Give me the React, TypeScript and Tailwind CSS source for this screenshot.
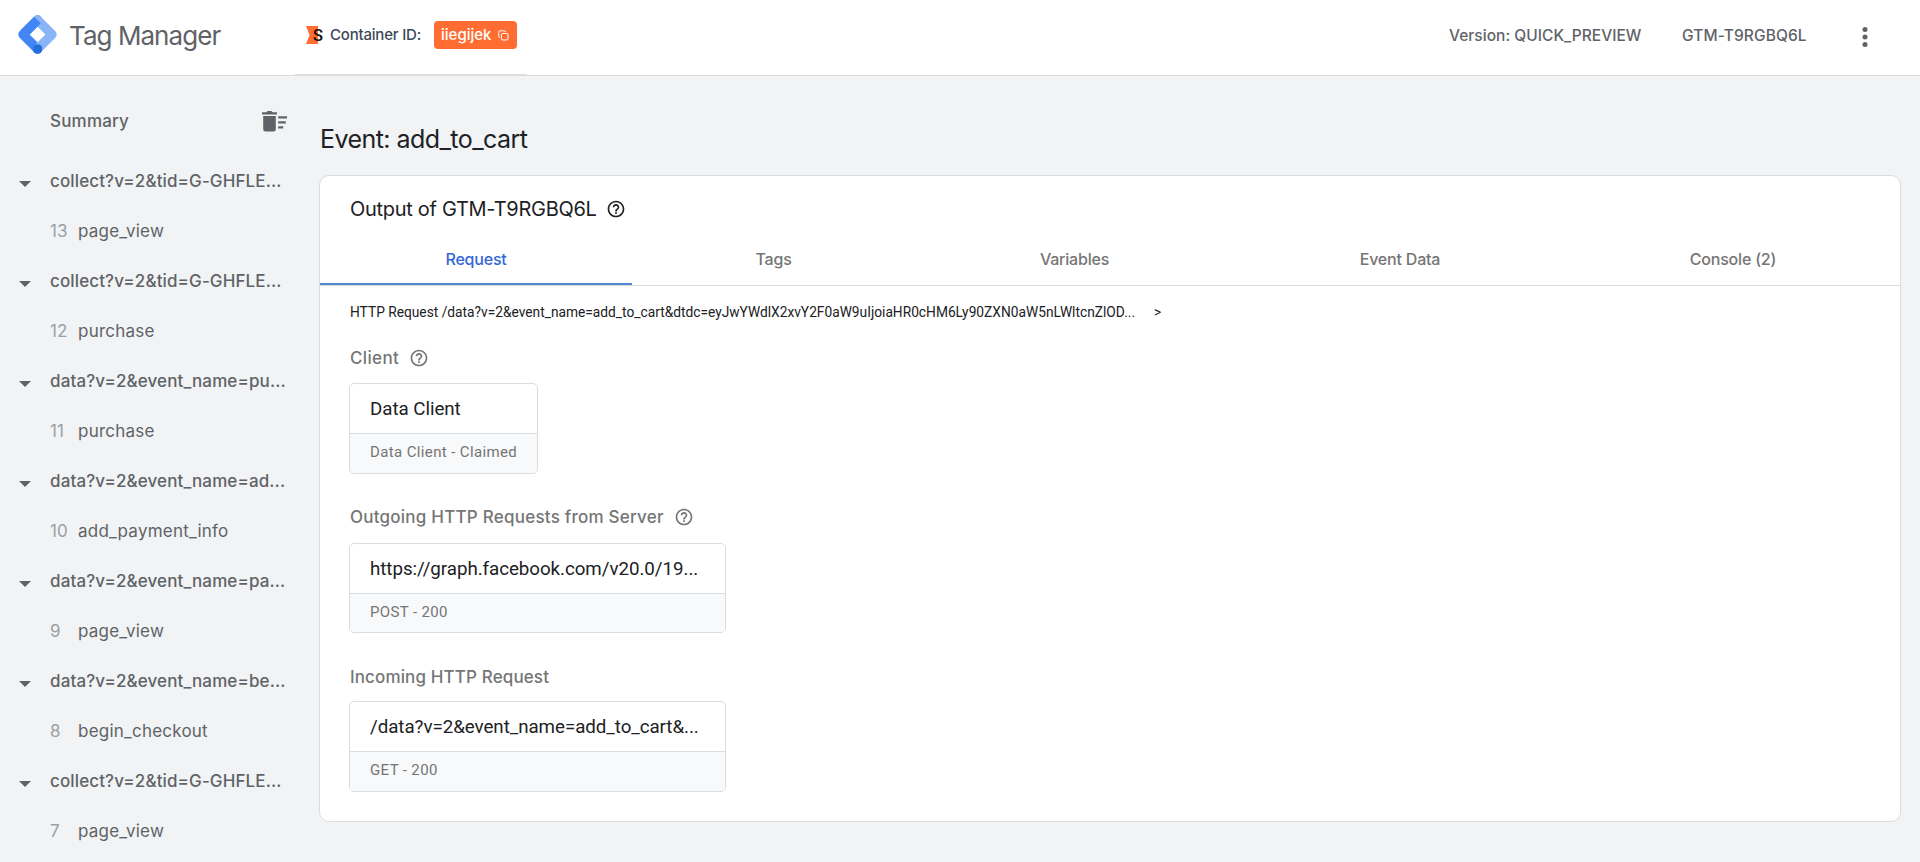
import { useState } from "react"
import clsx from "clsx"

const groups = [
  { name: "collect?v=2&tid=G-GHFLE...", events: [{ id: 13, name: "page_view" }] },
  { name: "collect?v=2&tid=G-GHFLE...", events: [{ id: 12, name: "purchase" }] },
  { name: "data?v=2&event_name=pu...", events: [{ id: 11, name: "purchase" }] },
  { name: "data?v=2&event_name=ad...", events: [{ id: 10, name: "add_payment_info" }] },
  { name: "data?v=2&event_name=pa...", events: [{ id: 9, name: "page_view" }] },
  { name: "data?v=2&event_name=be...", events: [{ id: 8, name: "begin_checkout" }] },
  { name: "collect?v=2&tid=G-GHFLE...", events: [{ id: 7, name: "page_view" }] },
]

const tabs = [
  { label: "Request", width: "w-[312px]" },
  { label: "Tags", width: "w-[283px]" },
  { label: "Variables", width: "w-[319px]" },
  { label: "Event Data", width: "w-[332px]" },
  { label: "Console (2)", width: "w-[334px]" },
]

const TagManagerLogo = () => (
  <svg
    width="39"
    height="39"
    viewBox="0 0 39 39"
    fill="none"
    strokeWidth="9.4"
    strokeLinejoin="round"
    strokeLinecap="round"
    className="shrink-0"
  >
    <path d="M19.5 5 5 19.5 19.5 34" stroke="#4285f4" />
    <path d="M19.5 5 34 19.5 19.5 34" stroke="#8ab4f8" />
    <path d="M19.5 5 5 19.5" stroke="#4285f4" strokeLinecap="butt" />
    <circle cx="19.5" cy="34" r="4.8" fill="#246fdb" />
  </svg>
)

const HelpIcon = ({ className }: { className?: string }) => (
  <svg width="20" height="20" viewBox="0 0 24 24" fill="currentColor" className={clsx("shrink-0", className)}>
    <path d="M11 18h2v-2h-2v2zm1-16C6.48 2 2 6.48 2 12s4.48 10 10 10 10-4.48 10-10S17.52 2 12 2zm0 18c-4.41 0-8-3.59-8-8s3.59-8 8-8 8 3.59 8 8-3.59 8-8 8zm0-14c-2.21 0-4 1.79-4 4h2c0-1.1.9-2 2-2s2 .9 2 2c0 2-3 1.75-3 5h2c0-2.25 3-2.5 3-5 0-2.21-1.79-4-4-4z" />
  </svg>
)

const Header = () => (
  <header className="flex h-[76px] shrink-0 border-b border-[#dadce0] bg-white">
    <div className="flex w-[295px] items-center pb-[7px] pl-[18px]">
      <TagManagerLogo />
      <h1 className="ml-3 pt-[3px] text-[26px] leading-8 tracking-[-0.95px] text-[#5f6368]">Tag Manager</h1>
    </div>
    <div className="flex w-[232px] items-center border-b border-[#e0e0e0] pb-1 pl-[11px]">
      <svg width="16" height="18" viewBox="0 0 16 18" className="shrink-0 overflow-visible">
        <path d="M0 0h12v18H0l3.6-9z" fill="#ff6d33" />
        <text x="6.8" y="15" className="font-[Roboto] text-[17px] font-medium" fill="#111">
          S
        </text>
      </svg>
      <span className="ml-2 text-[15px] font-medium tracking-[-0.2px] text-[#3c4858]">Container ID:</span>
      <button className="ml-[13px] flex h-7 w-[83px] items-center rounded-[4px] bg-[#ff6d33] pl-[7px] text-white">
        <span className="text-[15px] font-medium">iiegijek</span>
        <svg
          width="11"
          height="11"
          viewBox="0 0 11 11"
          fill="none"
          stroke="currentColor"
          className="ml-[7px] shrink-0"
        >
          <rect x="3.5" y="3.5" width="6.5" height="6.5" rx="1.2" />
          <path d="M2 7.5C1.2 7.5.8 7 .8 6.4V2C.8 1.2 1.3.8 2 .8h4.4c.7 0 1.1.4 1.1 1.2" />
        </svg>
      </button>
    </div>
    <div className="flex flex-1 items-center justify-end pb-1 pr-[46px] text-[15.5px] font-medium text-[#5f6368]">
      <span className="w-[233px] tracking-[0.03px]">Version: QUICK_PREVIEW</span>
      <span className="w-[174px] tracking-[0.1px]">GTM-T9RGBQ6L</span>
      <svg width="18" height="24" viewBox="0 0 18 24" fill="currentColor" className="mt-0.5">
        <circle cx="9" cy="4.5" r="2.5" />
        <circle cx="9" cy="12" r="2.5" />
        <circle cx="9" cy="19.5" r="2.5" />
      </svg>
    </div>
  </header>
)

const Sidebar = () => (
  <aside className="w-[319px] shrink-0 text-[17px] text-[#5f6368]">
    <div className="flex h-20 items-center pl-[50px] pr-8 pt-2.5">
      <span className="flex-1 pt-0.5 font-medium tracking-[0.2px]">Summary</span>
      <svg width="25" height="21" viewBox="0 0 25 21" fill="currentColor">
        <path d="M0 1.2h4.4L5.5 0h4l1.1 1.2H15v2.4H0z" />
        <path d="M1.2 5h12.6v13a2.5 2.5 0 0 1-2.5 2.5H3.7A2.5 2.5 0 0 1 1.2 18z" />
        <path d="M16.2 5.2H25v2.2h-8.800zM16.200 10.200h7.600v2.200h-7.600zM16.200 15.200h5v2.200h-5z" />
      </svg>
    </div>
    {groups.map((group, i) => (
      <div key={i}>
        <div className="flex h-[50px] items-center pl-[19px] pt-0.5">
          <svg width="12" height="6" viewBox="0 0 12 6" fill="currentColor" className="mt-[3px] shrink-0">
            <path d="M0 0h12L6 6z" />
          </svg>
          <span className="ml-[19px] whitespace-nowrap font-medium tracking-[0.12px]">{group.name}</span>
        </div>
        {group.events.map((event) => (
          <div key={event.id} className="flex h-[50px] items-center pl-[50px] pt-0.5">
            <span className="w-7 text-[#9aa0a6]">{event.id}</span>
            <span className="tracking-[0.22px]">{event.name}</span>
          </div>
        ))}
      </div>
    ))}
  </aside>
)

type InfoCardProps = {
  title: string
  subtitle: string
  className: string
}

const InfoCard = ({ title, subtitle, className }: InfoCardProps) => (
  <div
    className={clsx(
      "-ml-px overflow-hidden rounded-[5px] border border-[#dadce0] font-[Roboto]",
      className
    )}
  >
    <div className="flex h-[50px] items-center whitespace-nowrap border-b border-[#dadce0] pl-5 pt-0.5 text-[18.75px] tracking-[-0.05px] text-[#202124]">
      {title}
    </div>
    <div className="flex h-[39px] items-center bg-[#f8f9fa] pb-0.5 pl-5 text-[15px] tracking-[0.37px] text-[#757575]">
      {subtitle}
    </div>
  </div>
)

const OutputCard = () => {
  const [active, setActive] = useState("Request")

  return (
    <section className="h-[647px] w-[1582px] overflow-hidden rounded-[10px] border border-[#dadce0] bg-white">
      <div className="flex h-[59px] items-center pl-[30px] pt-1.5 text-[#202124]">
        <h3 className="text-[20px] tracking-[-0.3px]">Output of GTM-T9RGBQ6L</h3>
        <HelpIcon className="ml-[9px] mt-px" />
      </div>
      <div className="flex h-[51px] border-b border-[#dadce0]">
        {tabs.map((tab) => (
          <button
            key={tab.label}
            onClick={() => setActive(tab.label)}
            className={clsx(
              "flex items-center justify-center border-b-2 text-[16px] font-medium tracking-[-0.2px]",
              tab.width,
              active === tab.label ? "border-[#4f86cc] text-[#3367d6]" : "border-transparent text-[#757575]"
            )}
          >
            {tab.label}
          </button>
        ))}
      </div>
      <div className="px-[30px] text-[#757575]">
        <div className="flex h-[52px] items-center font-[Roboto] text-[13.75px] text-[#202124]">
          <span className="w-[804px] whitespace-nowrap">
            HTTP Request /data?v=2&event_name=add_to_cart&dtdc=eyJwYWdlX2xvY2F0aW9uIjoiaHR0cHM6Ly90ZXN0aW5nLWltcnZlOD...
          </span>
          <span>&gt;</span>
        </div>
        <div className="flex h-[45px] items-center pb-1">
          <h4 className="text-[17px] font-medium tracking-[0.35px]">Client</h4>
          <HelpIcon className="-mt-0.5 ml-[10px]" />
        </div>
        <InfoCard title="Data Client" subtitle="Data Client - Claimed" className="h-[91px] w-[189px]" />
        <div className="mt-[23px] flex h-[46px] items-center pb-1">
          <h4 className="text-[17px] font-medium tracking-[0.23px]">Outgoing HTTP Requests from Server</h4>
          <HelpIcon className="-mt-0.5 ml-[10px]" />
        </div>
        <InfoCard
          title="https://graph.facebook.com/v20.0/19..."
          subtitle="POST - 200"
          className="h-[90px] w-[377px]"
        />
        <div className="mt-[23px] flex h-[45px] items-center pb-0.5">
          <h4 className="text-[17px] font-medium tracking-[0.13px]">Incoming HTTP Request</h4>
        </div>
        <InfoCard
          title="/data?v=2&event_name=add_to_cart&..."
          subtitle="GET - 200"
          className="h-[91px] w-[377px]"
        />
      </div>
    </section>
  )
}

export default function App() {
  return (
    <div className="flex h-screen flex-col overflow-hidden bg-[#f1f3f4] font-[Inter,sans-serif]">
      <Header />
      <div className="flex flex-1">
        <Sidebar />
        <main>
          <h2 className="flex h-[99px] items-center pl-px pt-7 text-[25px] tracking-[-0.55px] text-[#202124]">
            Event: add_to_cart
          </h2>
          <OutputCard />
        </main>
      </div>
    </div>
  )
}
